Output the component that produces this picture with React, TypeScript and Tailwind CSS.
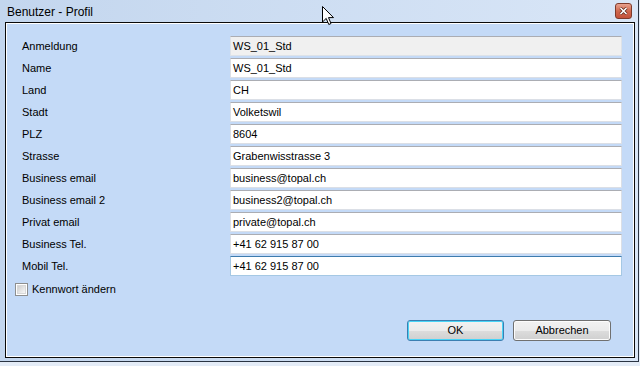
import React from "react";

const rows: [string, string][] = [
  ["Anmeldung", "WS_01_Std"],
  ["Name", "WS_01_Std"],
  ["Land", "CH"],
  ["Stadt", "Volketswil"],
  ["PLZ", "8604"],
  ["Strasse", "Grabenwisstrasse 3"],
  ["Business email", "business@topal.ch"],
  ["Business email 2", "business2@topal.ch"],
  ["Privat email", "private@topal.ch"],
  ["Business Tel.", "+41 62 915 87 00"],
  ["Mobil Tel.", "+41 62 915 87 00"],
];

export default function App() {
  return (
    <div className="w-[640px] h-[366px] bg-[#e4ecf7] relative overflow-hidden text-[11px] text-black [font-family:'Liberation_Sans',Arial,sans-serif]">
      <div className="w-[639px] h-[362px] border-r border-b border-[#2a3443] bg-gradient-to-r from-[#c3d6ee] to-[#d9e6f7] flex flex-col">
        <div className="h-[22px] flex items-center pl-[7px] pr-[6px] shrink-0">
          <span className="text-[12px] leading-none flex-1 pt-[1px]">Benutzer - Profil</span>
          <div className="w-[17px] h-[16px] rounded-[3px] border border-[#7e3b2c] bg-gradient-to-b from-[#e8a28f] via-[#d0694f] to-[#c4513a] flex items-center justify-center">
            <svg width="9" height="8" viewBox="0 0 9 8">
              <path d="M1.5 1 L7.5 7 M7.5 1 L1.5 7" stroke="#5a2418" strokeWidth="3" />
              <path d="M1.5 1 L7.5 7 M7.5 1 L1.5 7" stroke="#ffffff" strokeWidth="1.6" />
            </svg>
          </div>
        </div>
        <div className="ml-[5px] mr-[3px] h-[336px] border border-[#0a0a0a] bg-[#c4daf7]">
          <div className="h-full border border-white flex flex-col">
            <div className="pt-[12px] pl-[15px] flex flex-col gap-[2px]">
              {rows.map(([label, value], i) => {
                const readOnly = i === 0;
                const focused = i === rows.length - 1;
                return (
                  <div key={label} className="flex items-center h-[20px]">
                    <div className="w-[208px]">{label}</div>
                    <div
                      className={
                        "w-[392px] h-[20px] flex items-center pl-[2px] border " +
                        (focused
                          ? "border-[#a5c8e4] border-t-[#3d7bad] bg-white"
                          : readOnly
                          ? "border-[#dde2e8] border-t-[#abadb3] bg-[#f0f0f0]"
                          : "border-[#dbdfe6] border-t-[#abadb3] bg-white")
                      }
                    >
                      {value}
                    </div>
                  </div>
                );
              })}
            </div>
            <div className="flex items-center mt-[5px] pl-[8px] h-[16px]">
              <div className="w-[13px] h-[13px] border border-[#8e8f8f] bg-white p-[1px]">
                <div className="w-full h-full border border-[#d8d8d8] bg-gradient-to-br from-[#cfcfcf] to-[#f8f8f8]" />
              </div>
              <span className="ml-[4px]">Kennwort ändern</span>
            </div>
            <div className="flex justify-end gap-[9px] mt-[23px] pr-[22px]">
              <div className="w-[97px] h-[21px] rounded-[3px] border border-[#3c7fb1] shadow-[inset_0_0_0_1px_#48d4f7] bg-[linear-gradient(#f2f2f2_0%,#ebebeb_50%,#dddddd_50%,#cfcfcf_100%)] flex items-center justify-center">
                OK
              </div>
              <div className="w-[98px] h-[21px] rounded-[3px] border border-[#707070] shadow-[inset_0_0_0_1px_#fcfcfc] bg-[linear-gradient(#f2f2f2_0%,#ebebeb_50%,#dddddd_50%,#cfcfcf_100%)] flex items-center justify-center">
                Abbrechen
              </div>
            </div>
          </div>
        </div>
      </div>
      <svg className="absolute left-[322px] top-[6px]" width="13" height="20" viewBox="0 0 13 20">
        <path d="M0.5 0.5 L0.5 16 L4.2 12.4 L6.8 18.5 L9 17.5 L6.5 11.6 L11.5 11.6 Z" fill="white" stroke="black" strokeWidth="1" />
      </svg>
    </div>
  );
}
